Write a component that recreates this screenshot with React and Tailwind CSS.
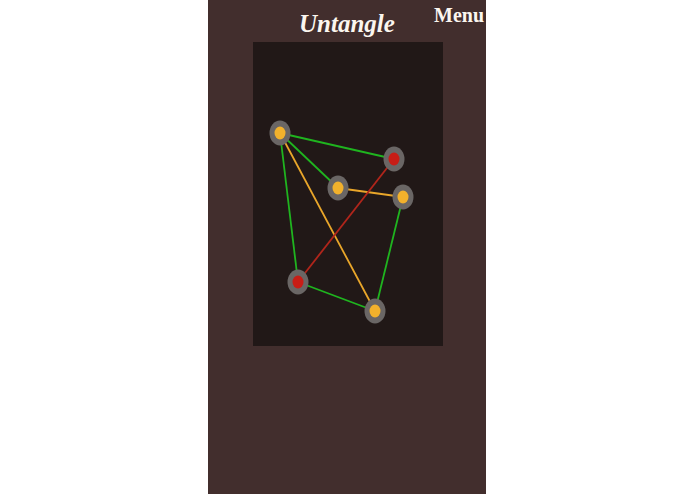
import React from "react";

const nodes = {
  a: { x: 27, y: 91, c: "#f2b12c" },
  b: { x: 141, y: 117, c: "#c81d16" },
  c: { x: 85, y: 146, c: "#f2b12c" },
  d: { x: 150, y: 155, c: "#f2b12c" },
  e: { x: 45, y: 240, c: "#c81d16" },
  f: { x: 122, y: 269, c: "#f2b12c" },
};

const edges = [
  ["a", "b", "#1fb41f"],
  ["a", "c", "#1fb41f"],
  ["a", "e", "#1fb41f"],
  ["a", "f", "#e9a62a"],
  ["c", "d", "#e9a62a"],
  ["b", "e", "#b0251b"],
  ["d", "f", "#1fb41f"],
  ["e", "f", "#1fb41f"],
];

function Board() {
  return (
    <svg width="190" height="304" viewBox="0 0 190 304" className="block">
      {edges.map(([p, q, col], i) => (
        <line
          key={i}
          x1={nodes[p].x}
          y1={nodes[p].y}
          x2={nodes[q].x}
          y2={nodes[q].y}
          stroke={col}
          strokeWidth="1.8"
        />
      ))}
      {Object.entries(nodes).map(([k, n]) => (
        <g key={k}>
          <ellipse cx={n.x} cy={n.y} rx="10.5" ry="12.5" fill="#6a6665" />
          <ellipse cx={n.x} cy={n.y} rx="5.5" ry="6.5" fill={n.c} />
        </g>
      ))}
    </svg>
  );
}

export default function App() {
  return (
    <div className="min-h-[494px] bg-white">
      <div className="relative ml-[208px] w-[278px] min-h-[494px] bg-[#422e2d] pt-[7px]">
        <h1 className="text-center text-[25px] font-bold italic leading-[34px] text-[#fbf6ef] [font-family:'Liberation_Serif',serif]">
          Untangle
        </h1>
        <button className="absolute right-[2px] top-[3px] text-[20px] font-bold leading-6 text-[#fbf6ef] [font-family:'Liberation_Serif',serif]">
          Menu
        </button>
        <div className="ml-[45px] mt-[1px] w-[190px] bg-[#211817]">
          <Board />
        </div>
      </div>
    </div>
  );
}
